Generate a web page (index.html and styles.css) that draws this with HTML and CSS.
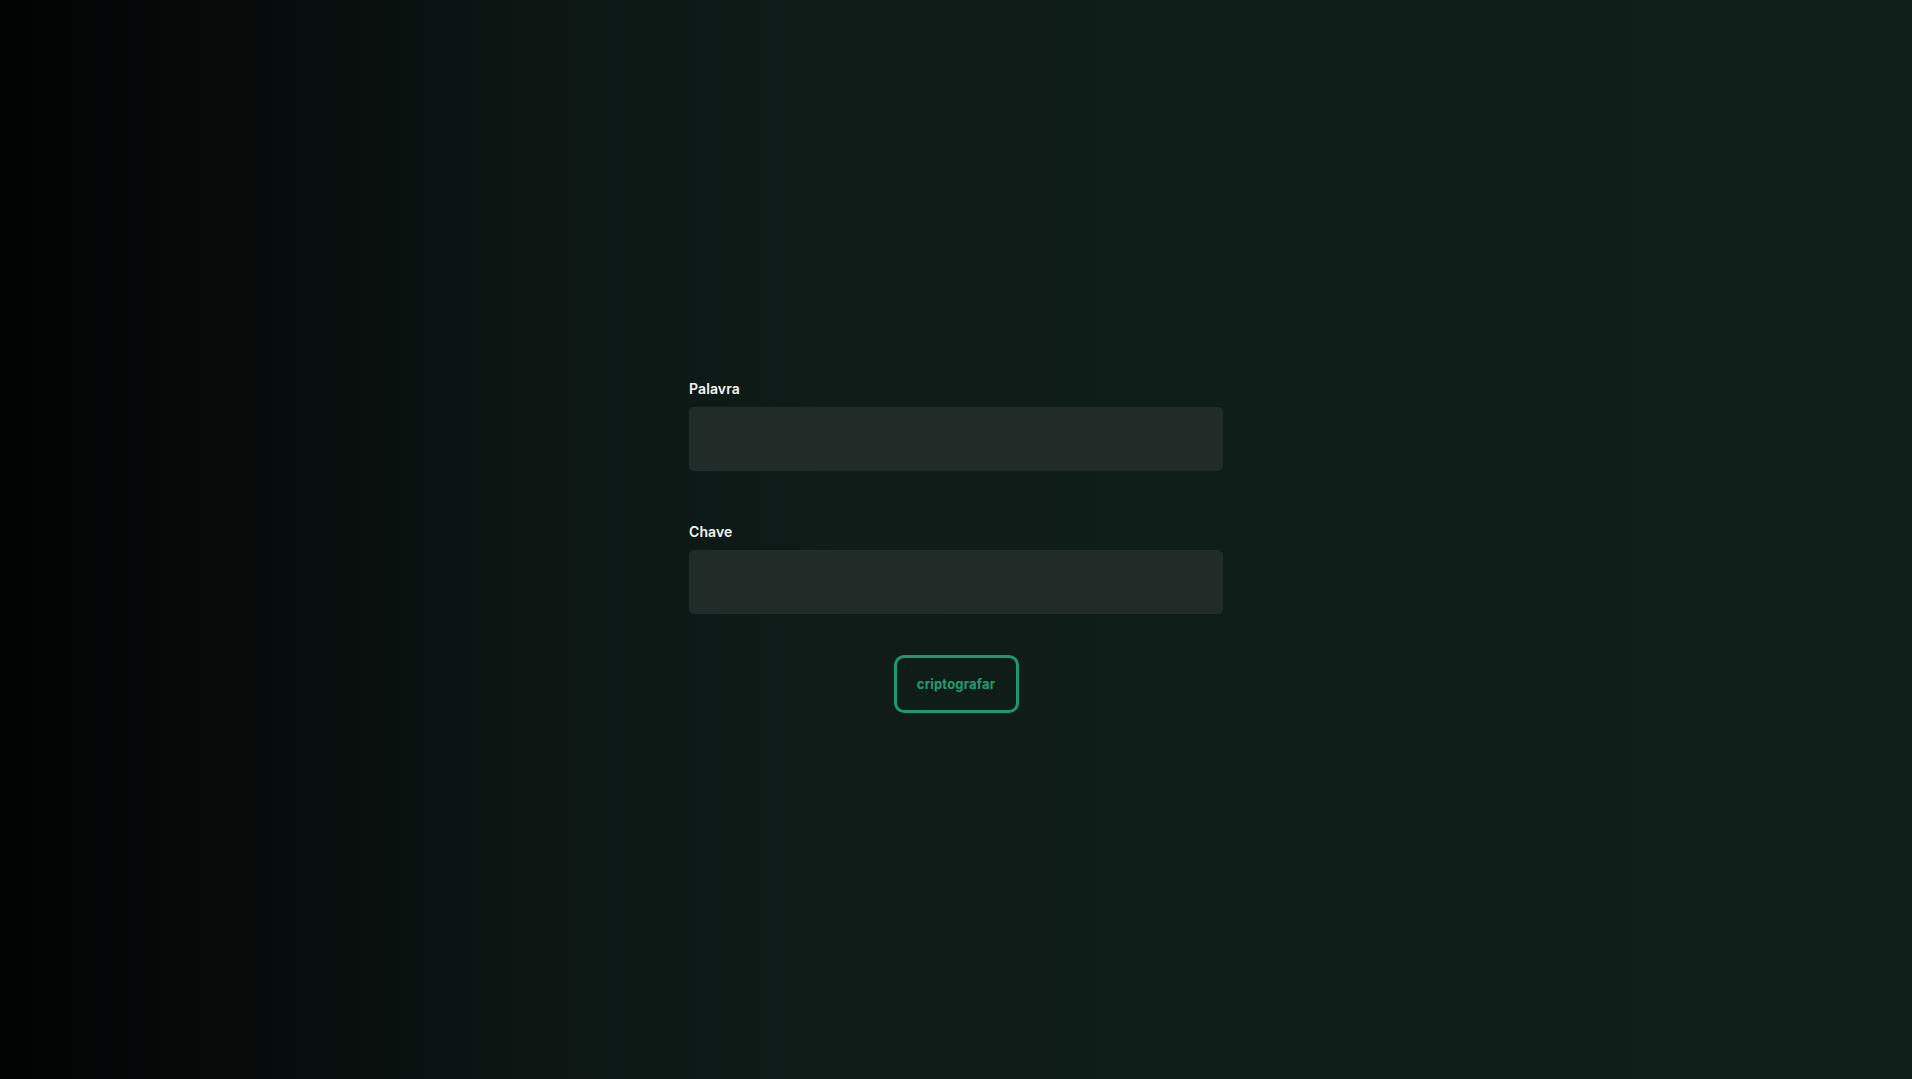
FILE: index.html
```html
<!DOCTYPE html>
<html lang="pt-BR">
<head>
<meta charset="utf-8">
<title>Criptografar</title>
<link rel="stylesheet" href="styles.css">
</head>
<body>
<main class="page">
  <form class="form">
    <div class="field">
      <label class="label" for="palavra">Palavra</label>
      <input class="input" id="palavra" type="text">
    </div>
    <div class="field field-second">
      <label class="label" for="chave">Chave</label>
      <input class="input" id="chave" type="text">
    </div>
    <div class="actions">
      <button class="button" type="button">criptografar</button>
    </div>
  </form>
</main>
</body>
</html>
```
FILE: styles.css
```css
* { box-sizing: border-box; }
html, body { margin: 0; height: 100%; }
body {
  background: linear-gradient(to right, #020303 0%, #070d0c 15%, #0c1714 28%, #0f1c18 45%, #101e1a 70%, #111f1b 100%);
  font-family: Inter, "Noto Sans", sans-serif;
  color: #f2f4f3;
}
.page {
  min-height: 100vh;
  display: flex;
  justify-content: center;
  padding-top: 380px;
}
.form {
  width: 534px;
  display: flex;
  flex-direction: column;
}
.field {
  display: flex;
  flex-direction: column;
  gap: 9px;
}
.field-second { margin-top: 52px; }
.label {
  font-size: 14px;
  line-height: 18px;
  font-weight: 600;
  letter-spacing: 0.1px;
  color: #f3f5f4;
}
.input {
  height: 64px;
  width: 100%;
  border: 1px solid #222e2b;
  border-radius: 5px;
  background: #212c29;
  color: #f2f4f3;
  font: inherit;
  padding: 0 16px;
  outline: none;
}
.actions {
  display: flex;
  justify-content: center;
  margin-top: 41px;
}
.button {
  width: 125px;
  height: 58px;
  border: 3px solid #1a9a6e;
  border-radius: 10px;
  background: transparent;
  color: #1f9f70;
  font-family: Inter, "Noto Sans", sans-serif;
  font-size: 13px;
  font-weight: 700;
  letter-spacing: 0.2px;
  cursor: pointer;
}
```
